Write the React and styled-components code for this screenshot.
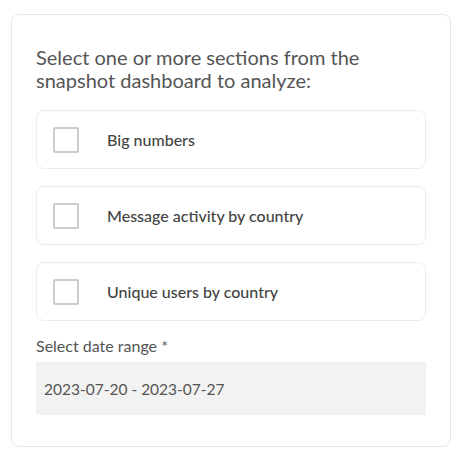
import styled, { createGlobalStyle } from "styled-components"

const GlobalStyle = createGlobalStyle`
    * { box-sizing: border-box; }
    body {
        margin: 0;
        background: #ffffff;
        font-family: "Lato", "Open Sans", sans-serif;
    }
`

const sections = [
    "Big numbers",
    "Message activity by country",
    "Unique users by country",
]

const App = () => {
    return (
      <Page>
          <GlobalStyle />
          <Card>
              <Intro>Select one or more sections from the snapshot dashboard to analyze:</Intro>
              <OptionList>
                  {sections.map((name) => (
                      <Option key={name}>
                          <Box type="checkbox" />
                          <OptionText>{name}</OptionText>
                      </Option>
                  ))}
              </OptionList>
              <Field>
                  <FieldLabel>Select date range *</FieldLabel>
                  <DateInput>2023-07-20 - 2023-07-27</DateInput>
              </Field>
          </Card>
      </Page>
    )
}

export default App

const Page = styled.div`
    padding: 14px 16px 14px 11px;
`

const Card = styled.div`
    width: 440px;
    border: 1px solid #e8e8e8;
    border-radius: 8px;
    padding: 31px 24px 31px 24px;
    display: flex;
    flex-direction: column;
`

const Intro = styled.p`
    margin: 0;
    font-size: 20px;
    line-height: 23px;
    color: #555555;
    padding-right: 40px;
`

const OptionList = styled.div`
    margin-top: 18px;
    display: flex;
    flex-direction: column;
    gap: 17px;
`

const Option = styled.label`
    height: 59px;
    border: 1px solid #ececec;
    border-radius: 8px;
    padding: 0 16px;
    display: flex;
    align-items: center;
    gap: 28px;
    cursor: pointer;
`

const Box = styled.input`
    appearance: none;
    margin: 0;
    width: 26px;
    height: 26px;
    border: 2px solid #cccccc;
    border-radius: 2px;
    background: #ffffff;
    flex-shrink: 0;
`

const OptionText = styled.span`
    font-size: 16px;
    font-weight: 500;
    color: #444444;
`

const Field = styled.div`
    margin-top: 15px;
    display: flex;
    flex-direction: column;
    gap: 6px;
`

const FieldLabel = styled.span`
    font-size: 16px;
    line-height: 20px;
    color: #555555;
`

const DateInput = styled.div`
    height: 53px;
    background: #f2f2f2;
    padding: 0 8px;
    display: flex;
    align-items: center;
    font-size: 15.5px;
    color: #555555;
`
